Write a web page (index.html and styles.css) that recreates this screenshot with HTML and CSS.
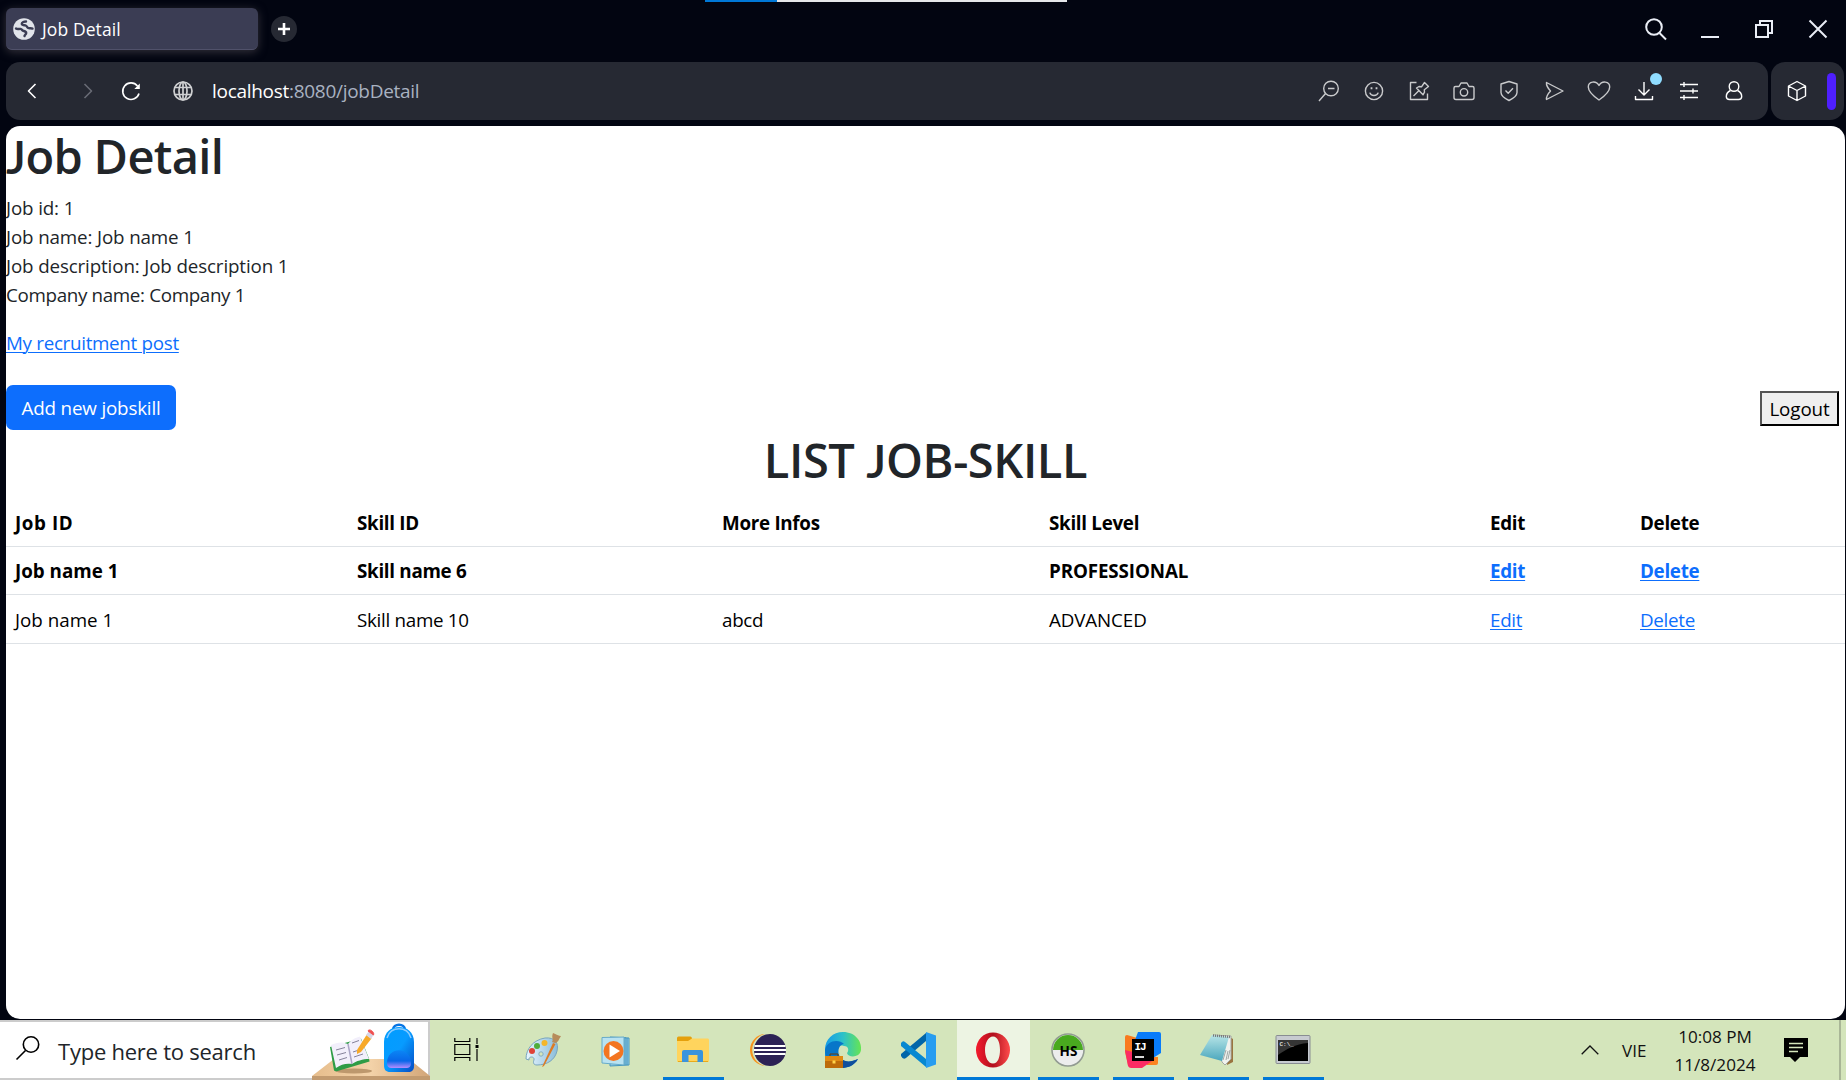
FILE: index.html
```html
<!DOCTYPE html>
<html lang="en">
<head>
<meta charset="utf-8">
<title>Job Detail</title>
<link rel="stylesheet" href="styles.css">
</head>
<body>
<div class="desktop">
  <header class="tabs">
    <div class="tab">
      <svg class="favicon" viewBox="0 0 22 22"><circle cx="11" cy="11" r="10.800" fill="#e1e4ea"/><path d="M3 10.500c1.500 1.200 3 .2 4.500.4s1.500 1.600 3 2 2.700.6 2.700 2-1.200 1.600-1.700 3.100M13 3.500c-2 0-4.200.6-4.200 2.200s2 1.300 3.600 1.700 1.600 2 2.800 2.600 2.800-.2 4.300.6" fill="none" stroke="#3b3d54" stroke-width="2.400" stroke-linecap="round"/></svg>
      <span class="tab-title">Job Detail</span>
    </div>
    <div class="new-tab"><svg viewBox="0 0 26 26"><path d="M13 7v12M7 13h12" stroke="#fff" stroke-width="2.600"/></svg></div>
    <div class="loading"><i></i></div>
    <div class="window-controls">
      <svg viewBox="0 0 24 24"><circle cx="10" cy="10" r="7.800"/><path d="M15.500 16 22 22.500"/></svg>
      <svg viewBox="0 0 24 24"><path d="M3 20h18"/></svg>
      <svg viewBox="0 0 24 24"><path d="M4 8h12v12H4zM8 8V4h12v12h-4"/></svg>
      <svg viewBox="0 0 24 24"><path d="M3.500 3.500l17 17m0-17l-17 17"/></svg>
    </div>
  </header>

  <nav class="toolbar">
    <div class="address-bar">
      <div class="nav-buttons">
        <svg viewBox="0 0 24 24"><path d="M15.500 5 8.500 12l7 7"/></svg>
        <svg class="dim" viewBox="0 0 24 24"><path d="M8.500 5l7 7-7 7"/></svg>
        <svg viewBox="0 0 24 24"><path d="M20 14.500A8.300 8.300 0 1 1 18.500 7"/><path d="M20.800 4.500v5.500h-5.500z" fill="#fff" stroke="none"/></svg>
        <svg class="globe" viewBox="0 0 24 24"><circle cx="12" cy="12" r="9"/><ellipse cx="12" cy="12" rx="4" ry="9"/><path d="M4 8.500h16M4 15.500h16M12 3v18"/></svg>
      </div>
      <div class="url"><b>localhost</b>:8080/jobDetail</div>
      <div class="tools">
        <svg viewBox="0 0 24 24"><circle cx="14" cy="9.500" r="7.300"/><path d="M8.500 14.500 2 22M11 9.500h6.500"/></svg>
        <svg viewBox="0 0 24 24"><circle cx="12" cy="12" r="8.600"/><path d="M7.800 13.600c1.200 3.800 7.200 3.800 8.400 0" stroke-width="1.400"/><path d="M9.500 8.300v1.900M14.500 8.300v1.900" stroke-width="1.800"/></svg>
        <svg viewBox="0 0 24 24"><path d="M9.500 3.500h-6v17h17v-6M6.500 17l5-5M9.500 9l2.500-1.500 2.500.3 3-4.300 4 4-4.200 3.200.2 2.500-1.500 2.600z"/></svg>
        <svg viewBox="0 0 24 24"><path d="M3.500 7.500H7L9 4h6l2 3.500h3.500a1.500 1.500 0 0 1 1.500 1.500v9.500a2 2 0 0 1-2 2H4a2 2 0 0 1-2-2V9a1.500 1.500 0 0 1 1.500-1.500z"/><circle cx="12" cy="13.300" r="3.700"/></svg>
        <svg viewBox="0 0 24 24"><path d="M12 2.500 20 5v8.500c0 3.500-4 6-8 8-4-2-8-4.500-8-8V5zM8.500 11.500l2.700 2.700 4.800-5"/></svg>
        <svg viewBox="0 0 24 24"><path d="M4.500 3.500 21 12 4.500 20.500c-.5-3.500 1.700-6 4-8.500C6.200 9.500 4 7 4.500 3.500z"/></svg>
        <svg viewBox="0 0 24 24"><path d="M12 21C7 17.500 1.300 13 1.300 8c0-6 8-6.500 10.700-1.500C14.700 1.500 22.700 2 22.700 8c0 5-5.700 9.500-10.700 13z"/></svg>
        <span class="download"><svg class="bright" viewBox="0 0 24 24"><path d="M12 3v12.500M6.500 10.500 12 16l5.500-5.500M3.500 17v3.500h17V17"/></svg></span>
        <svg class="bright" viewBox="0 0 24 24"><path d="M3 5.500h18M3 12h18M3 18.500h18M7 3v5M16 9.500v5M7 16v5"/></svg>
        <svg class="bright" viewBox="0 0 24 24"><circle cx="12" cy="7.500" r="4.800"/><path d="M8.500 11.500C5.500 13 4.300 15.500 4.300 17.500c0 2.200 1.300 3 3.200 3h9c1.900 0 3.200-.8 3.200-3 0-2-1.200-4.500-4.200-6"/></svg>
      </div>
    </div>
    <div class="side-panel">
      <svg class="bright" viewBox="0 0 24 24"><path d="M12 2.500 20.500 7v10L12 21.500 3.500 17V7zM3.500 7 12 11.500 20.500 7M12 11.500v10"/></svg>
      <i></i>
    </div>
  </nav>

  <main class="page">
    <h1><span class="cap-j">J</span>ob Detail</h1>
    <p class="info">Job id: 1<br>Job name: Job name 1<br>Job description: Job description 1<br><span class="company">Company name: Company 1</span></p>
    <p class="post-link"><a>My recruitment post</a></p>
    <div class="actions">
      <a class="btn">Add new jobskill</a>
      <button class="logout">Logout</button>
    </div>
    <h1 class="list-title">LIST <span class="cap-j">J</span>OB-SKILL</h1>
    <table class="skills">
      <colgroup><col class="c1"><col class="c2"><col class="c3"><col class="c4"><col class="c5"><col class="c6"></colgroup>
      <tr class="strong"><td class="job-id">Job ID</td><td>Skill ID</td><td>More Infos</td><td>Skill Level</td><td>Edit</td><td>Delete</td></tr>
      <tr class="strong"><td class="job">Job name 1</td><td>Skill name 6</td><td></td><td class="level">PROFESSIONAL</td><td><a>Edit</a></td><td><a>Delete</a></td></tr>
      <tr><td class="job">Job name 1</td><td>Skill name 10</td><td>abcd</td><td class="level">ADVANCED</td><td><a>Edit</a></td><td><a>Delete</a></td></tr>
    </table>
  </main>

  <footer class="taskbar">
    <div class="search">
      <svg class="search-icon" viewBox="0 0 26 26"><circle cx="16" cy="9.500" r="7.700"/><path d="M10.500 15.500 1.500 24.500"/></svg>
      <span class="search-text">Type here to search</span>
      <svg class="school" viewBox="0 0 118 58">
        <defs><linearGradient id="bag" x1="0" y1="0" x2="1" y2="1"><stop offset="0" stop-color="#009dff"/><stop offset=".5" stop-color="#079bff"/><stop offset="1" stop-color="#064bc4"/></linearGradient>
        <linearGradient id="pocket" x1="0" y1="0" x2="0" y2="1"><stop offset="0" stop-color="#0b86f5"/><stop offset=".6" stop-color="#0867e8"/><stop offset="1" stop-color="#b68cff"/></linearGradient>
        <linearGradient id="desk" x1="0" x2="1"><stop offset="0" stop-color="#e6bd8c"/><stop offset=".5" stop-color="#f3d2a8"/><stop offset="1" stop-color="#d2a577"/></linearGradient></defs>
        <path d="M22 36h75l21 17H0z" fill="url(#desk)"/><path d="M0 53h118v5H0z" fill="#c29b70"/>
        <ellipse cx="42" cy="48" rx="18" ry="2.500" fill="#bd986d"/>
        <path d="M18 24l4 23.500 2 1L57.500 38.500l-.5-3-8-20z" fill="#2e9c46"/>
        <path d="M19 22c6-3 12-3.500 17-1 4-5 8-6.500 12-7.500L57 36c-6 0-13 2-17 5-5-1-11 0-16 4z" fill="#f2effb"/><path d="M36 21l4 20" stroke="#aaa5c5" stroke-width="1.500"/>
        <path d="M24 27l9-2.500M25 32l9-2.500M27 37l8-2.500M40 20l7-2.500M41 29l9-3M42 34l9-3" stroke="#85829a" stroke-width="1"/>
        <path d="M45 27l9.500-15 5 3.500-10.500 13.500-4 2z" fill="#f7a928"/><path d="M54 12l2.500-3.500 5 3.500-2.500 4z" fill="#d8d6e5"/><path d="M56 8c1-3 7 1 5.500 4z" fill="#f05050" stroke="#f05050"/>
        <path d="M81 7c0-7 12-7 12 0" fill="none" stroke="#0875e4" stroke-width="2.500"/><path d="M72 42V19c0-20 30-20 30 0v24c0 4-2 6-6 6H78c-4 0-6-2-6-7z" fill="url(#bag)"/><path d="M75 15C78 2.500 96 2.500 99 15" fill="none" stroke="#8acaff" stroke-width="1.500"/><path d="M75 40c0-17 24-17 24 0 0 4-2 5-5 5H80c-3 0-5-1-5-5z" fill="url(#pocket)"/>
      </svg>
    </div>
    <div class="task-view"><svg viewBox="0 0 24 24"><path d="M.8 0v3.500h15V0M.8 6.500h15v10H.8zM.8 23v-3.500h15V23M23 0v6M23 11v12" fill="none" stroke="#000" stroke-width="1.200"/><path d="M21.500 7h3v3h-3z"/></svg></div>
    <div class="apps">
      <div class="app"><svg viewBox="0 0 36 36"><defs><linearGradient id="pal" x1="0" x2="1"><stop stop-color="#e8f6ff"/><stop offset="1" stop-color="#8bbdda"/></linearGradient></defs><path d="M1 27C1 17 8 8 20 6c10-1 14 5 12 13-2 9-10 14-20 14-4 0-4-3-3-5 1-4-6-4-5 0z" fill="url(#pal)" stroke="#7aa5bd"/><circle cx="7" cy="19" r="3" fill="#df4238"/><circle cx="12" cy="14" r="3" fill="#50ad3b"/><circle cx="19.500" cy="11" r="3" fill="#f4b62c"/><circle cx="16" cy="22" r="2.200" fill="#d5e6bc" stroke="#87aec2"/><path d="M17 35 28 11l2.500 1L19 34z" fill="#dc7b24"/><path d="M27 10c2-3-1-4 1-9 3 1 6 3 8 3-2 3-3 7-6 7z" fill="#b78c5b"/></svg></div>
      <div class="app"><svg viewBox="0 0 36 36"><path d="M10 5l19 1v27l-19 1z" fill="#96cfe9" stroke="#4696bd"/><path d="M25 5v28M27 6v27" stroke="#3b8eb7"/><path d="M2 5.500 24 5v28L2 31z" fill="#b9e2f1" stroke="#67abc9"/><circle cx="13.500" cy="19" r="10" fill="#f37521"/><path d="M9.500 12.500v13L20 19z" fill="#fff"/></svg></div>
      <div class="app open"><svg viewBox="0 0 36 36"><path d="M2 6q0-1.500 1.500-1.500h12Q17 4.500 17 7v4H2z" fill="#e5a00c"/><path d="M2 9h11l4-2.500h16q1 0 1 1.500v21q0 1-1 1H3q-1 0-1-1z" fill="#ffd45d"/><path d="M3 29h30v1H3z" fill="#e9aa1a"/><path d="M7 30V20q0-2 2-2h17q2 0 2 2v10h-5.500v-7h-9v7z" fill="#3b94dc"/></svg></div>
      <div class="app"><svg viewBox="0 0 36 36"><circle cx="16" cy="18" r="16" fill="#f7941e"/><circle cx="18.500" cy="18" r="16.300" fill="#d5e6bc"/><circle cx="20" cy="18" r="16" fill="#2c2255"/><path d="M4.500 14h31M4 18h32M4.500 22h31" stroke="#fff" stroke-width="2"/></svg></div>
      <div class="app"><svg viewBox="0 0 36 36"><defs><linearGradient id="edge" x1="0" x2="1"><stop stop-color="#159be8"/><stop offset=".5" stop-color="#2dc1c9"/><stop offset="1" stop-color="#66e552"/></linearGradient></defs><path d="M0 18C0 7 8 0 18 0c12 0 19 9 18 18-1 8-13 8-14 3 2-2 2-7-3-7C11 12 3 18 0 27z" fill="url(#edge)"/><path d="M0 18C2 8 14 7 19 12c-8 1-7 15 1 17 5 2 10-1 13-2-4 7-11 9-17 9C5 35 0 28 0 18z" fill="#0876c9"/><path d="M14 20c0 9 9 12 19 7-4 7-11 9-17 9z" fill="#104f9c"/><path d="M0 24h18v12H0z" fill="#bd6b0a"/><path d="M0 24h18v5H0z" fill="#e08a13"/><path d="M5 24v-2h8v2" fill="none" stroke="#6d3c08"/><path d="M7.500 28.500h3v3h-3z" fill="#ffd34a"/></svg></div>
      <div class="app"><svg viewBox="0 0 36 36"><path d="M1 24q2 4 5 2L26 9V1L1 22z" fill="#0065a9"/><path d="M1 11q2-3 4-1l21 17v8L1 14z" fill="#0788d1"/><path d="M26 0l10 3.500v29L26 36z" fill="#279df0"/></svg></div>
      <div class="app open active"><svg viewBox="0 0 36 36"><defs><linearGradient id="op" x1="0" x2="1"><stop stop-color="#f51b2d"/><stop offset=".5" stop-color="#b0101d"/><stop offset="1" stop-color="#ff4c4c"/></linearGradient></defs><path fill-rule="evenodd" d="M18 .5a17 17.500 0 1 0 0 35 17 17.500 0 1 0 0-35zM18 4.500c5 0 7 6.500 7 13.500s-2 13.500-7 13.500-8-6.500-8-13.500 3-13.500 8-13.500z" fill="url(#op)"/></svg></div>
      <div class="app open"><svg viewBox="0 0 36 36"><circle cx="18" cy="18" r="16" fill="#eceded" stroke="#929b92" stroke-width="1.600"/><path d="M3 18a15 15 0 0 1 30 0z" fill="#49a91f"/><text x="18.500" y="23.500" class="hs">HS</text></svg></div>
      <div class="app open"><svg viewBox="0 0 36 36"><path d="M0 5q0-2 2-2l14 4-4 22-9 4L0 20z" fill="#f97a1e"/><path d="M22 25h11v6q0 2-2 2H22z" fill="#fb8420"/><path d="M0 18l20 5 10 4-13 9H6q-2 0-3-2z" fill="#fb2b64"/><path d="M13 0h21q2 0 2 2v19l-8 5L10 8z" fill="#087cfa"/><path d="M7 7h22v22H7z"/><text x="9.500" y="17.500" class="ij">IJ</text><path d="M10 25h9" stroke="#fff" stroke-width="1.700"/></svg></div>
      <div class="app open"><svg viewBox="0 0 36 36"><defs><linearGradient id="np" x1="0" y1="0" x2="0" y2="1"><stop stop-color="#b8e5e7"/><stop offset="1" stop-color="#4ba7bd"/></linearGradient></defs><path d="M30 5l3 2v23l-6 3z" fill="#9a7440"/><path d="M13 3l18 1v23l-6 6-3-3z" fill="#f0f2ee" stroke="#a6aaa5"/><path d="M12 3l17 2-7 24-22-6z" fill="url(#np)"/><path d="M13 3.500l18 1.500" stroke="#777" stroke-width="2.500" stroke-dasharray="1 1"/><path d="M26 18l-3 10M28 19l-2 9M30 18l-2 9" stroke="#a1a8a6"/></svg></div>
      <div class="app open"><svg viewBox="0 0 36 36"><rect x="1" y="3.500" width="34" height="28" rx="1" fill="#c7cbd0" stroke="#888d92"/><path d="M3 8h30v21H3z"/><path d="M3 8h30v3C20 12 12 17 3 23z" fill="#353535"/><text x="4.500" y="13.500" class="cmd">C:\_</text></svg></div>
    </div>
    <div class="tray">
      <svg class="chevron" viewBox="0 0 18 10"><path d="M.7 9.300 9 1l8.300 8.300" fill="none" stroke="#111" stroke-width="1.300"/></svg>
      <span class="lang">VIE</span>
      <div class="clock"><span>10:08 PM</span><span>11/8/2024</span></div>
      <svg class="notice" viewBox="0 0 24 24"><path d="M0 0h24v19h-8l-5 5-5-5H0z"/><path d="M5 5.500h14M5 9.500h14M5 13.500h9" stroke="#d5e6bc" stroke-width="1.300"/></svg>
    </div>
  </footer>
</div>
</body>
</html>
```
FILE: styles.css
```css
* { box-sizing: border-box; }
body {
  margin: 0;
  overflow: hidden;
  font-family: "Open Sans", "Noto Sans", sans-serif;
  color: #212529;
}
svg { display: block; flex: none; overflow: visible; }
.desktop {
  width: 1846px;
  height: 1080px;
  display: flex;
  flex-direction: column;
  background: #020511;
}

/* tab strip */
.tabs {
  height: 62px;
  padding: 0 14px 0 6px;
  display: flex;
  align-items: flex-start;
  position: relative;
}
.tab {
  width: 252px;
  height: 42px;
  margin-top: 8px;
  padding-left: 7px;
  display: flex;
  align-items: center;
  gap: 7px;
  background: #3b3d54;
  border-bottom: 1px solid #50516a;
  border-radius: 6px;
  box-shadow: 0 2px 10px #34323b;
}
.favicon { width: 22px; height: 22px; }
.tab-title { font-size: 17.5px; letter-spacing: .1px; color: #fff; }
.new-tab {
  width: 26px;
  height: 26px;
  margin: 16px 0 0 13px;
  border-radius: 50%;
  background: #262933;
}
.loading {
  position: absolute;
  left: 705px;
  top: 0;
  width: 362px;
  height: 2px;
  background: #e5e7ea;
}
.loading i { display: block; width: 72px; height: 2px; background: #0078d7; }
.window-controls {
  margin: 17px 0 0 auto;
  padding-right: 2px;
  display: flex;
  gap: 30px;
}
.window-controls svg { width: 24px; height: 24px; fill: none; stroke: #e9edf5; stroke-width: 2; }

/* address row */
.toolbar { height: 58px; padding: 0 2px 0 6px; display: flex; gap: 3px; }
.address-bar, .side-panel {
  display: flex;
  align-items: center;
  background: #262933;
  border-radius: 14px;
}
.address-bar { width: 1762px; padding: 0 22px 0 14px; }
.address-bar svg, .side-panel svg {
  width: 24px;
  height: 24px;
  fill: none;
  stroke: #c9cacc;
  stroke-width: 1.4;
  stroke-linejoin: round;
}
.nav-buttons { display: flex; width: 192px; }
.nav-buttons svg { stroke: #fff; stroke-width: 1.6; }
.nav-buttons svg.dim { margin-left: 32px; stroke: #686b75; }
.nav-buttons svg:nth-child(3) { margin-left: 19px; }
.nav-buttons svg.globe { margin-left: 28px; stroke: #cfd0d2; stroke-width: 1.7; }
.url { font-size: 19px; letter-spacing: -.29px; color: #a9b2c1; }
.url b { font-weight: 400; color: #fff; }
.tools { margin-left: auto; display: flex; gap: 21px; }
.address-bar .bright, .side-panel .bright { stroke: #fff; }
.download { position: relative; }
.download::after {
  content: "";
  position: absolute;
  right: -6px;
  top: -6px;
  width: 12px;
  height: 12px;
  border-radius: 50%;
  background: #8fdcff;
}
.side-panel { width: 73px; justify-content: space-between; padding: 0 8px 0 14px; }
.side-panel i { width: 9px; height: 37px; border-radius: 5px; background: #4f1fff; }

/* web page */
.page {
  width: 1839px;
  height: 893px;
  margin: 6px 0 0 6px;
  padding-top: 2px;
  border-radius: 14px;
  background: #fff;
  overflow: hidden;
  font-size: 18.8px;
  line-height: 28.8px;
  letter-spacing: -.14px;
}
h1 { margin: 0 0 8.6px; font-size: 47px; line-height: 57.6px; font-weight: 600; letter-spacing: -.65px; }
.cap-j { font-family: Lato, sans-serif; font-weight: 600; }
p { margin: 0 0 19.2px; }
a { color: #0d6efd; text-decoration: underline; text-decoration-thickness: 1px; text-underline-offset: 2px; }
.company { letter-spacing: -.34px; }
.post-link { margin-bottom: 27.6px; letter-spacing: -.3px; }
.actions { display: flex; justify-content: space-between; align-items: center; padding-right: 6px; height: 45.4px; }
.btn {
  height: 45px;
  padding: 9px 15.6px 7px;
  background: #0d6efd;
  color: #fff;
  border-radius: 7px;
  text-decoration: none;
  letter-spacing: -.18px;
}
.logout {
  width: 79px;
  height: 35px;
  margin-top: 2px;
  padding: 1px 0 0;
  border: 2px solid;
  border-color: #555 #000 #000 #555;
  background: #efefef;
  color: #000;
  font: inherit;
  letter-spacing: -.1px;
  line-height: 30px;
}
.list-title { padding-top: 2px; margin-bottom: 7.8px; text-align: center; letter-spacing: -.4px; }
.skills { width: 1839px; table-layout: fixed; border-collapse: collapse; color: #000; letter-spacing: -.29px; }
.skills td { height: 48.6px; padding: 10.6px 9px 8.2px; border-bottom: 1px solid #dee2e6; }
.c1 { width: 342px; } .c2 { width: 365px; } .c3 { width: 327px; }
.c4 { width: 441px; } .c5 { width: 150px; } .c6 { width: 214px; }
.strong { font-weight: 700; }
.skills .job { letter-spacing: 0; }
.skills .job-id { letter-spacing: .6px; }
.skills .level { letter-spacing: -.12px; }

/* taskbar */
.taskbar { height: 60px; margin-top: 1px; display: flex; background: #d4e5bb; }
.search {
  width: 430px;
  border: 2px solid #ccc;
  border-left: 0;
  background: #fff;
  display: flex;
  align-items: center;
}
.search-icon { width: 26px; height: 26px; margin: -4px 0 0 15px; fill: none; stroke: #000; stroke-width: 1.6; }
.search-text { margin-left: 17px; padding-top: 2px; font-size: 22px; letter-spacing: -.24px; white-space: nowrap; }
.school { width: 118px; height: 58px; margin: 2px -2px -2px auto; }
.task-view { width: 75.500px; padding: 18px 0 0 24px; }
.task-view svg { width: 24px; height: 24px; }
.apps { display: flex; }
.app { width: 75px; display: flex; justify-content: center; align-items: center; }
.app svg { width: 36px; height: 36px; }
.app.open { width: 61px; margin: 0 7px; border-bottom: 3px solid #0078d7; padding-top: 3px; }
.app.active { width: 73px; margin: 0 1px; background: #edf4e3; }
.hs { font: 700 13.5px "Open Sans", sans-serif; text-anchor: middle; }
.ij { font: 700 11px "Liberation Mono", monospace; fill: #fff; letter-spacing: -1px; }
.cmd { font: 700 6px "Liberation Mono", monospace; fill: #ddd; }
.tray { margin-left: auto; display: flex; align-items: center; color: #111; border-right: 2px solid #a9b697; margin-right: 5px; padding-right: 31px; }
.chevron { width: 18px; height: 10px; }
.lang { margin-left: 23px; font-size: 17px; width: 25px; }
.clock { width: 138px; margin-left: -1px; display: flex; flex-direction: column; align-items: center; padding-top: 1px; font-size: 17.1px; line-height: 28px; }
.notice { width: 24px; height: 24px; }
```
